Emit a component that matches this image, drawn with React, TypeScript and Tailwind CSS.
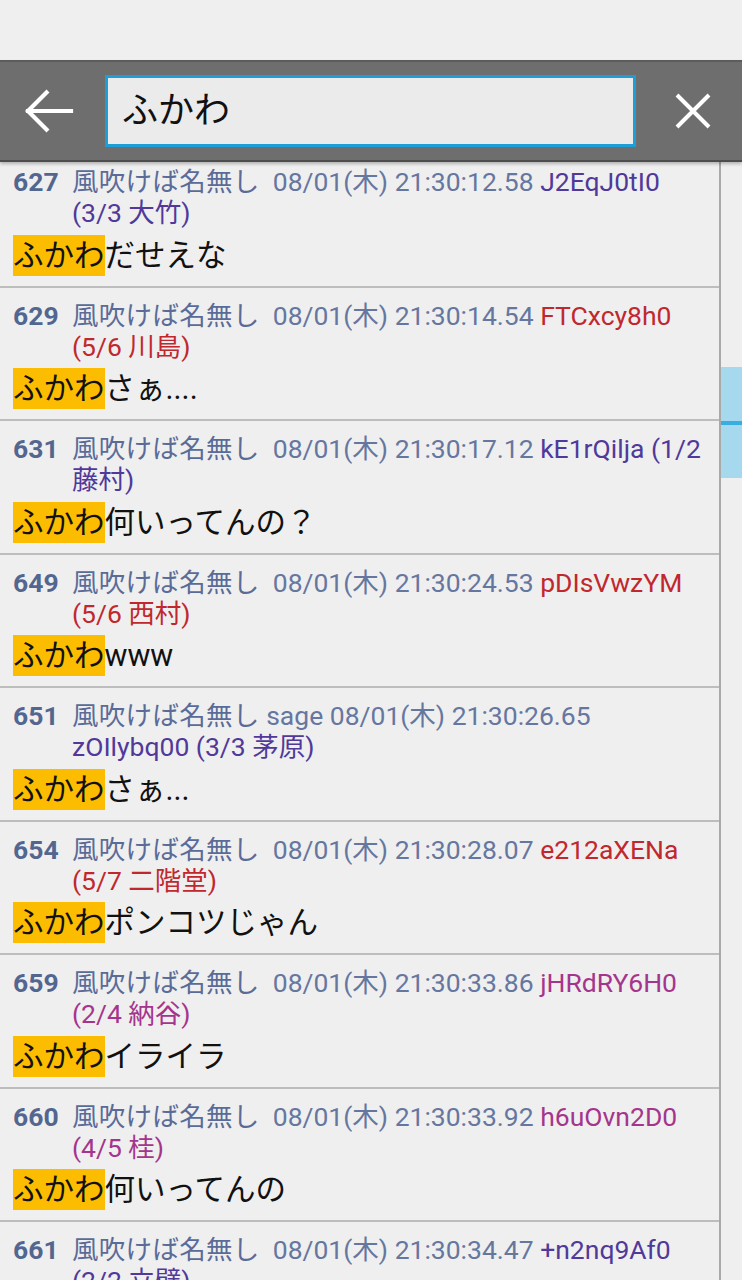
import React from 'react';

type Post = {
  no: number;
  mail: string;
  date: string;
  id: string;
  rest: string;
  color: string;
  body: string;
};

const PURPLE = 'text-[#50399a]';
const RED = 'text-[#c0282e]';
const MAGENTA = 'text-[#a5358c]';

const posts: Post[] = [
  { no: 627, mail: '', date: '08/01(木) 21:30:12.58', id: 'J2EqJ0tI0', rest: '(3/3 大竹)', color: PURPLE, body: 'だせえな' },
  { no: 629, mail: '', date: '08/01(木) 21:30:14.54', id: 'FTCxcy8h0', rest: '(5/6 川島)', color: RED, body: 'さぁ....' },
  { no: 631, mail: '', date: '08/01(木) 21:30:17.12', id: 'kE1rQilja (1/2', rest: '藤村)', color: PURPLE, body: '何いってんの？' },
  { no: 649, mail: '', date: '08/01(木) 21:30:24.53', id: 'pDIsVwzYM', rest: '(5/6 西村)', color: RED, body: 'www' },
  { no: 651, mail: 'sage', date: '08/01(木) 21:30:26.65', id: '', rest: 'zOIlybq00 (3/3 茅原)', color: PURPLE, body: 'さぁ...' },
  { no: 654, mail: '', date: '08/01(木) 21:30:28.07', id: 'e212aXENa', rest: '(5/7 二階堂)', color: RED, body: 'ポンコツじゃん' },
  { no: 659, mail: '', date: '08/01(木) 21:30:33.86', id: 'jHRdRY6H0', rest: '(2/4 納谷)', color: MAGENTA, body: 'イライラ' },
  { no: 660, mail: '', date: '08/01(木) 21:30:33.92', id: 'h6uOvn2D0', rest: '(4/5 桂)', color: MAGENTA, body: '何いってんの' },
  { no: 661, mail: '', date: '08/01(木) 21:30:34.47', id: '+n2nq9Af0', rest: '(2/2 立壁)', color: PURPLE, body: '' },
];

const QUERY = 'ふかわ';

function PostRow({ p }: { p: Post }) {
  return (
    <div className="border-b-2 border-[#bdbdbd] pt-3 pb-[10px] pl-[13px] pr-2">
      <div className="flex text-[26.5px] leading-[31px]">
        <div className="w-[59px] shrink-0 font-bold text-[#52668f]">{p.no}</div>
        <div className="flex-1 min-w-0">
          <div className="whitespace-pre">
            <span className="text-[#5a6b98] tracking-[0.3px]">風吹けば名無し</span>
            <span className="text-[#66779f]">{' ' + p.mail + ' ' + p.date}</span>
            {p.id && <span className={p.color}>{' ' + p.id}</span>}
          </div>
          <div className={`whitespace-pre ${p.color}`}>{p.rest}</div>
        </div>
      </div>
      <div className="mt-[6.5px] text-[30.5px] leading-[41px] text-[#111111] whitespace-nowrap">
        <span className="inline-block bg-[#fcbc00]">{QUERY}</span>
        {p.body}
      </div>
    </div>
  );
}

export default function App() {
  return (
    <div className="w-[742px] h-[1280px] overflow-hidden bg-[#efefef] flex flex-col font-['Roboto','Noto_Sans_CJK_JP',sans-serif]">
      <div className="h-[60px] shrink-0" />

      <div className="relative z-10 h-[102px] shrink-0 bg-[#6e6e6e] border-t-2 border-[#5c5c5c] border-b-2 border-b-[#4d4d4d] shadow-[0_2px_3px_rgba(0,0,0,0.25)] flex items-center">
        <div className="w-[105px] shrink-0 flex items-center pl-[24px]">
          <svg width="50" height="46" viewBox="0 0 50 46" fill="none" stroke="#ffffff" strokeWidth="4.2" strokeLinecap="square">
            <path d="M4 23H47" />
            <path d="M24 3L4 23L24 43" strokeLinecap="butt" strokeLinejoin="miter" />
          </svg>
        </div>
        <div className="flex-1 h-[72px] bg-[#ebebeb] border-[3px] border-[#1d9ed6] flex items-center pl-[14px]">
          <span className="text-[36px] leading-none text-[#111111]">{QUERY}</span>
        </div>
        <div className="w-[106px] shrink-0 flex items-center justify-center pl-[8px]">
          <svg width="36" height="36" viewBox="0 0 36 36" fill="none" stroke="#ffffff" strokeWidth="4">
            <path d="M2 2L34 34M34 2L2 34" />
          </svg>
        </div>
      </div>

      <div className="flex-1 flex min-h-0">
        <div className="flex-1 min-w-0 overflow-hidden border-r-2 border-[#a9a9a9]">
          <div className="-mt-[8px]">
            {posts.map((p) => (
              <PostRow key={p.no} p={p} />
            ))}
          </div>
        </div>
        <div className="w-[21px] shrink-0 pt-[205px]">
          <div className="h-[54px] bg-[#a6d8ee]" />
          <div className="h-[4px] bg-[#38ade0]" />
          <div className="h-[53px] bg-[#a6d8ee]" />
        </div>
      </div>
    </div>
  );
}
